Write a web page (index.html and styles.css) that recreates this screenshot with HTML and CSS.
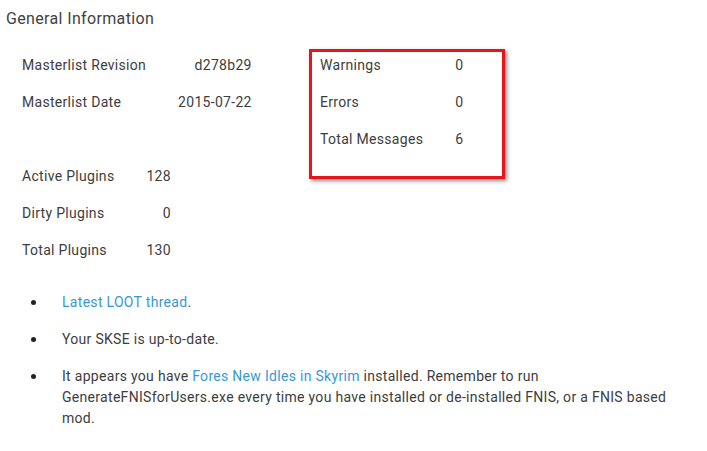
FILE: index.html
```html
<!DOCTYPE html>
<html>
<head>
<meta charset="utf-8">
<link rel="stylesheet" href="styles.css">
</head>
<body>
<div class="panel">
  <h2 class="title">General Information</h2>
  <div class="summary">
    <div class="left-col">
      <table class="info">
        <tr><td>Masterlist Revision</td><td class="num">d278b29</td></tr>
        <tr><td>Masterlist Date</td><td class="num">2015-07-22</td></tr>
      </table>
      <table class="info">
        <tr><td>Active Plugins</td><td class="num">128</td></tr>
        <tr><td>Dirty Plugins</td><td class="num">0</td></tr>
        <tr><td>Total Plugins</td><td class="num">130</td></tr>
      </table>
    </div>
    <div class="msg-box">
      <table class="info msgs">
        <tr><td>Warnings</td><td>0</td></tr>
        <tr><td>Errors</td><td>0</td></tr>
        <tr><td>Total Messages</td><td>6</td></tr>
      </table>
    </div>
  </div>
  <ul class="notes">
    <li><span><a href="#" class="link">Latest LOOT thread</a>.</span></li>
    <li><span>Your SKSE is up-to-date.</span></li>
    <li><span>It appears you have <a href="#" class="link">Fores New Idles in Skyrim</a> installed. Remember to run GenerateFNISforUsers.exe every time you have installed or de-installed FNIS, or a FNIS based mod.</span></li>
  </ul>
</div>
</body>
</html>
```

FILE: styles.css
```css
html, body {
  margin: 0;
  padding: 0;
  background: #ffffff;
}
body {
  font-family: Roboto, "Liberation Sans", sans-serif;
  color: #3d3d3d;
  font-size: 14px;
  letter-spacing: 0.3px;
}
.panel {
  padding: 7px 30px 0 6px;
}
.title {
  margin: 0;
  font-size: 16px;
  font-weight: 400;
  line-height: 24px;
  color: #424242;
  letter-spacing: 0.35px;
}
.summary {
  display: flex;
  align-items: flex-start;
  margin-top: 18px;
}
.left-col {
  width: 303px;
  flex: none;
  padding-top: 3px;
  display: flex;
  flex-direction: column;
  align-items: flex-start;
  gap: 37px;
}
.info {
  border-collapse: collapse;
  border-spacing: 0;
}
.info td {
  padding: 0 16px 11px 16px;
  line-height: 26px;
  white-space: nowrap;
  vertical-align: top;
}
.info td.num {
  text-align: right;
}
.msg-box {
  width: 196px;
  flex: none;
  box-sizing: border-box;
  border: 3px solid #e8141a;
  padding-bottom: 13px;
  box-shadow: 2px 2px 4px rgba(0, 0, 0, 0.45);
}
.msgs td:first-child {
  padding-left: 8px;
}
.notes {
  list-style: none;
  margin: 18px 0 0 0;
  padding: 0;
}
.notes li {
  display: flex;
  line-height: 21px;
  margin-bottom: 16px;
}
.notes li::before {
  content: "";
  flex: none;
  width: 5px;
  height: 5px;
  border-radius: 50%;
  background: #222222;
  margin: 8px 26px 0 25px;
}
.link {
  color: #3b97d3;
  text-decoration: none;
}
```
